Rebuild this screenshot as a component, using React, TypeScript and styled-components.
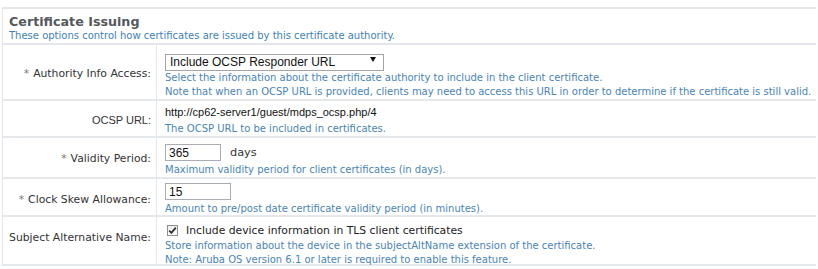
import React from "react";
import styled, { createGlobalStyle } from "styled-components";

const GlobalStyle = createGlobalStyle`
  body {
    margin: 0;
    background: #ffffff;
    font-family: "DejaVu Sans", Verdana, sans-serif;
  }
`;

const Panel = styled.div`
  margin: 7px 0 0 2px;
  width: 813px;
  border-left: 1px solid #e2e6ea;
`;

const Header = styled.div`
  border-top: 2px solid #e3e7eb;
  border-bottom: 2px solid #e3e7eb;
  padding: 5px 0 0 6px;
  height: 29px;
`;

const Title = styled.div`
  font-weight: bold;
  font-size: 12.7px;
  color: #55595d;
  line-height: 16px;
`;

const Subtitle = styled.div`
  font-size: 10px;
  color: #3f7fb5;
  line-height: 12px;
`;

const Row = styled.div<{ $h: number }>`
  display: grid;
  grid-template-columns: 154px 1fr;
  height: ${(p) => p.$h}px;
  border-bottom: 2px solid #e6e9ec;
`;

const Label = styled.div<{ $arial?: boolean; $pt: number }>`
  border-right: 1px solid #e3e6ea;
  text-align: right;
  padding: ${(p) => p.$pt}px 5px 0 0;
  font-family: ${(p) =>
    p.$arial ? `"Liberation Sans", Arial, sans-serif` : `"DejaVu Sans", Verdana, sans-serif`};
  font-size: ${(p) => (p.$arial ? "11px" : "10.8px")};
  line-height: 13px;
  color: #333333;
`;

const Star = styled.span`
  color: #777;
  margin-right: 4px;
`;

const Field = styled.div<{ $pt: number }>`
  padding: ${(p) => p.$pt}px 0 0 8px;
`;

const Help = styled.div<{ $mt?: number }>`
  margin-top: ${(p) => p.$mt ?? 2}px;
  font-size: 10px;
  color: #4a84b6;
  line-height: 14px;
  white-space: nowrap;
`;

const SelectWrap = styled.div`
  position: relative;
  width: 219px;
  height: 17px;
`;

const Select = styled.select`
  appearance: none;
  width: 100%;
  height: 100%;
  border: 1px solid #a5a5a5;
  background: #ffffff;
  font-family: "Liberation Sans", Arial, sans-serif;
  font-size: 12px;
  color: #111;
  padding: 0 0 0 4px;
  margin: 0;
  border-radius: 0;
`;

const Arrow = styled.span`
  position: absolute;
  right: 8px;
  top: 6px;
  width: 0;
  height: 0;
  border-left: 3px solid transparent;
  border-right: 3px solid transparent;
  border-top: 5px solid #111;
  pointer-events: none;
`;

const Plain = styled.div`
  font-family: "Liberation Sans", Arial, sans-serif;
  font-size: 11px;
  color: #111;
  line-height: 14px;
`;

const InputLine = styled.div`
  display: flex;
  align-items: center;
  gap: 9px;
  height: 17px;
`;

const TextBox = styled.input<{ $w: number }>`
  width: ${(p) => p.$w}px;
  height: 17px;
  box-sizing: border-box;
  border: 1px solid #a9acb2;
  padding: 0 3px;
  margin: 0;
  font-family: "Liberation Sans", Arial, sans-serif;
  font-size: 12px;
  color: #111;
  outline: none;
`;

const Unit = styled.span`
  font-size: 11.3px;
  color: #333;
`;

const CheckLine = styled.label`
  display: flex;
  align-items: center;
  gap: 8px;
  font-size: 10.8px;
  color: #222;
  height: 14px;
`;

const Box = styled.span`
  width: 11px;
  height: 11px;
  box-sizing: border-box;
  border: 1px solid #8e8f8f;
  background: linear-gradient(#ececec, #ffffff);
  display: flex;
  align-items: center;
  justify-content: center;
  margin-left: 2px;
`;

export default function App() {
  return (
    <>
      <GlobalStyle />
      <Panel>
        <Header>
          <Title>Certificate Issuing</Title>
          <Subtitle>These options control how certificates are issued by this certificate authority.</Subtitle>
        </Header>

        <Row $h={54}>
          <Label $pt={22}>
            <Star>*</Star>Authority Info Access:
          </Label>
          <Field $pt={6}>
            <SelectWrap>
              <Select defaultValue="ocsp">
                <option value="ocsp">Include OCSP Responder URL</option>
              </Select>
              <Arrow />
            </SelectWrap>
            <Help $mt={3}>
              Select the information about the certificate authority to include in the client certificate.
              <br />
              Note that when an OCSP URL is provided, clients may need to access this URL in order to determine if the certificate is still valid.
            </Help>
          </Field>
        </Row>

        <Row $h={35}>
          <Label $arial $pt={13}>OCSP URL:</Label>
          <Field $pt={4}>
            <Plain>http://cp62-server1/guest/mdps_ocsp.php/4</Plain>
            <Help $mt={3}>The OCSP URL to be included in certificates.</Help>
          </Field>
        </Row>

        <Row $h={39}>
          <Label $pt={14}>
            <Star>*</Star>Validity Period:
          </Label>
          <Field $pt={6}>
            <InputLine>
              <TextBox $w={56} defaultValue="365" />
              <Unit>days</Unit>
            </InputLine>
            <Help $mt={2}>Maximum validity period for client certificates (in days).</Help>
          </Field>
        </Row>

        <Row $h={36}>
          <Label $pt={14}>
            <Star>*</Star>Clock Skew Allowance:
          </Label>
          <Field $pt={4}>
            <InputLine>
              <TextBox $w={66} defaultValue="15" />
            </InputLine>
            <Help $mt={2}>Amount to pre/post date certificate validity period (in minutes).</Help>
          </Field>
        </Row>

        <Row $h={47}>
          <Label $pt={14}>Subject Alternative Name:</Label>
          <Field $pt={6}>
            <CheckLine>
              <Box>
                <svg width="9" height="9" viewBox="0 0 9 9">
                  <path d="M1.2 4.6 L3.4 6.8 L7.8 1.6" fill="none" stroke="#333" strokeWidth="1.8" />
                </svg>
              </Box>
              Include device information in TLS client certificates
            </CheckLine>
            <Help $mt={2}>
              Store information about the device in the subjectAltName extension of the certificate.
              <br />
              Note: Aruba OS version 6.1 or later is required to enable this feature.
            </Help>
          </Field>
        </Row>
      </Panel>
    </>
  );
}
